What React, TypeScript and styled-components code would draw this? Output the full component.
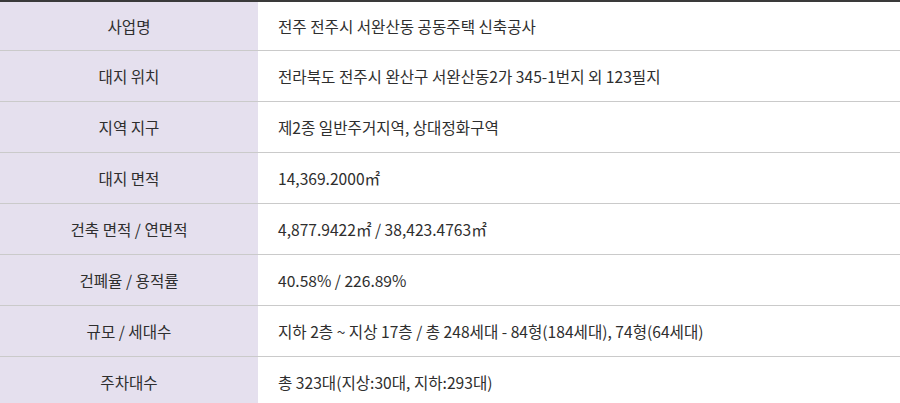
import React from "react";
import styled, { createGlobalStyle } from "styled-components";

const GlobalStyle = createGlobalStyle`
  html, body {
    margin: 0;
    padding: 0;
    background: #ffffff;
  }
  body {
    font-family: "Noto Sans CJK KR", "Noto Sans", sans-serif;
  }
`;

const Table = styled.div`
  width: 900px;
  border-top: 2px solid #3a3a3a;
  display: flex;
  flex-direction: column;
`;

const Row = styled.div`
  display: grid;
  grid-template-columns: 258px 1fr;
  height: 50px;
  border-bottom: 1px solid #cacaca;
  &:first-child {
    height: 48px;
  }
  &:last-child {
    border-bottom: none;
  }
`;

const Label = styled.div`
  background: #e5e0ee;
  display: flex;
  align-items: center;
  justify-content: center;
  font-size: 15.6px;
  color: #2e2e2e;
`;

const Value = styled.div`
  display: flex;
  align-items: center;
  padding-left: 20px;
  font-size: 15.6px;
  color: #2e2e2e;
`;

const rows: { label: string; value: string }[] = [
  { label: "사업명", value: "전주 전주시 서완산동 공동주택 신축공사" },
  { label: "대지 위치", value: "전라북도 전주시 완산구 서완산동2가 345-1번지 외 123필지" },
  { label: "지역 지구", value: "제2종 일반주거지역, 상대정화구역" },
  { label: "대지 면적", value: "14,369.2000㎡" },
  { label: "건축 면적 / 연면적", value: "4,877.9422㎡ / 38,423.4763㎡" },
  { label: "건폐율 / 용적률", value: "40.58% / 226.89%" },
  {
    label: "규모 / 세대수",
    value: "지하 2층 ~ 지상 17층 / 총 248세대 - 84형(184세대), 74형(64세대)",
  },
  { label: "주차대수", value: "총 323대(지상:30대, 지하:293대)" },
];

export default function App() {
  return (
    <>
      <GlobalStyle />
      <Table>
        {rows.map((row) => (
          <Row key={row.label}>
            <Label>{row.label}</Label>
            <Value>{row.value}</Value>
          </Row>
        ))}
      </Table>
    </>
  );
}
